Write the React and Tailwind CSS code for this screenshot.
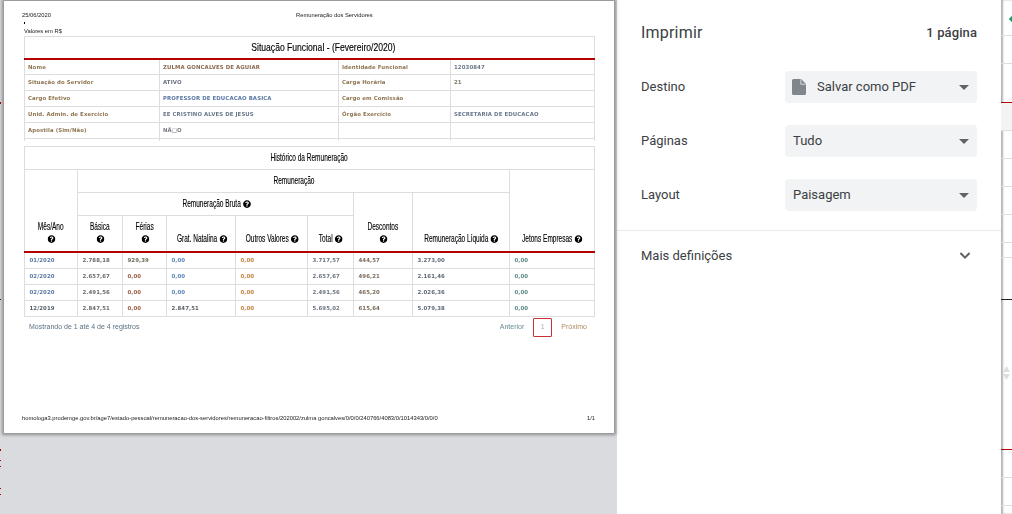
import { FaQuestionCircle } from "react-icons/fa";

const cellFont = "font-['DejaVu_Sans',sans-serif] font-bold text-[5.4px] tracking-[0.1px]";

const situacao = [
  ["Nome", "ZULMA GONCALVES DE AGUIAR", "Identidade Funcional", "12030847", "text-[#8f7550]", "text-[#8a6a50]", "text-[#8f7550]", "text-[#6a7888]"],
  ["Situação do Servidor", "ATIVO", "Carga Horária", "21", "text-[#8f7550]", "text-[#6a7280]", "text-[#8f7550]", "text-[#7a7a65]"],
  ["Cargo Efetivo", "PROFESSOR DE EDUCACAO BASICA", "Cargo em Comissão", "", "text-[#8f7550]", "text-[#5a78a5]", "text-[#8f7550]", ""],
  ["Unid. Admin. de Exercício", "EE CRISTINO ALVES DE JESUS", "Órgão Exercício", "SECRETARIA DE EDUCACAO", "text-[#8f7550]", "text-[#6a788c]", "text-[#8f7550]", "text-[#6a788c]"],
  ["Apostila (Sim/Não)", "NÃ□O", "", "", "text-[#8f7550]", "text-[#7a7580]", "", ""],
];

const historico = [
  ["01/2020", "2.788,18", "929,39", "0,00", "0,00", "3.717,57", "444,57", "3.273,00", "0,00"],
  ["02/2020", "2.657,67", "0,00", "0,00", "0,00", "2.657,67", "496,21", "2.161,46", "0,00"],
  ["02/2020", "2.491,56", "0,00", "0,00", "0,00", "2.491,56", "465,20", "2.026,36", "0,00"],
  ["12/2019", "2.847,51", "0,00", "2.847,51", "0,00", "5.695,02", "615,64", "5.079,38", "0,00"],
];

const historicoCores = [
  "text-[#5a78a5]",
  "text-[#6a6a70]",
  "text-[#a05a40]",
  "text-[#5585b5]",
  "text-[#c08040]",
  "text-[#6a7580]",
  "text-[#7a6a5a]",
  "text-[#606878]",
  "text-[#5a8585]",
];

// cells that don't follow their column's colour
const corEspecial = {
  "0-2": "text-[#6a6a55]",
  "3-0": "text-[#55606a]",
  "3-3": "text-[#5a5f66]",
};

const rightRows = [
  { h: "h-[36px]", line: "border-[#dddddd]" },
  { h: "h-[28px]", line: "border-[#dddddd]" },
  { h: "h-[39px]", line: "border-[#b30000]" },
  { h: "h-[28px]", line: "border-[#dddddd]", bg: "bg-[#f4f4f4]" },
  { h: "h-[28px]", line: "border-[#dddddd]" },
  { h: "h-[28px]", line: "border-[#dddddd]" },
  { h: "h-[28px]", line: "border-[#dddddd]" },
  { h: "h-[28px]", line: "border-[#dddddd]" },
  { h: "h-[15px]", line: "border-[#dddddd]" },
  { h: "h-[42px]", line: "border-[#222222]" },
  { h: "h-[150px]", line: "border-[#b30000]" },
  { h: "h-[28px]", line: "border-[#dddddd]" },
  { h: "h-[28px]", line: "border-[#dddddd]" },
];

const Help = () => (
  <FaQuestionCircle className="ml-[3px] inline-block scale-x-[1.6] text-[8px] text-black align-[-1px]" />
);

const HeadCell = ({ children, className = "", ...rest }) => (
  <th
    className={`border border-[#dddddd] p-0 font-['Liberation_Sans',sans-serif] text-[10.5px] font-normal text-black [-webkit-text-stroke:0.15px_black] ${className}`}
    {...rest}
  >
    <div className="flex justify-center">
      <span className="inline-block shrink-0 scale-x-[0.62] whitespace-nowrap">{children}</span>
    </div>
  </th>
);

const Caret = () => (
  <svg width="10" height="5" viewBox="0 0 10 5" className="shrink-0">
    <path d="M0 0h10L5 5z" fill="#5f6368" />
  </svg>
);

const Campo = ({ label, children }) => (
  <div className="flex h-[32px] items-center justify-between">
    <span className="text-[13px] text-[#3c4043]">{label}</span>
    <div className="flex h-[32px] w-[192px] items-center rounded-[4px] bg-[#f1f3f4] pl-[8px] pr-[8px] text-[13px] text-[#3c4043]">
      <div className="flex flex-1 items-center">{children}</div>
      <Caret />
    </div>
  </div>
);

const App = () => {
  return (
    <div className="flex h-[514px] w-[1012px] overflow-hidden bg-white font-['Roboto',sans-serif]">
      <div className="relative flex h-full w-[617px] shrink-0 bg-[#dadbde] pl-[4px] pr-[3px] pt-[1px]">
        {/* sliver of the page behind the dialog */}
        <div className="absolute left-0 top-[102px] h-[2px] w-[1px] bg-[#b30000]" />
        <div className="absolute left-0 top-[299px] h-[1px] w-[1px] bg-[#222222]" />
        <div className="absolute left-0 top-[449px] h-[2px] w-[1px] bg-[#b30000]" />
        <div className="absolute left-0 top-[460px] h-[1px] w-[1px] bg-[#b30000]" />
        <div className="absolute left-0 top-[466px] h-[1px] w-[1px] bg-[#b30000]" />
        <div className="absolute left-0 top-[488px] h-[1px] w-[1px] bg-[#b30000]" />
        <div className="absolute left-0 top-[494px] h-[1px] w-[1px] bg-[#b30000]" />

        <div className="flex h-[432px] w-[610px] flex-col bg-white px-[20px] pb-[10px] pt-[11px] shadow-[0_0_3px_2px_rgba(0,0,0,0.35)] blur-[0.25px]">
          <div className="relative flex h-[7px] items-center font-['Liberation_Sans',sans-serif] text-[5.8px] text-[#222222]">
            <span className="-ml-[2px]">25/06/2020</span>
            <span className="absolute left-[272px]">Remuneração dos Servidores</span>
          </div>
          <div className="mt-[3px] h-[2px] w-[1px] bg-black" />
          <div className="mt-[4px] h-[7px] font-['Liberation_Sans',sans-serif] text-[5.8px] leading-[7px] text-[#222222]">
            Valores em R$
          </div>

          <table className="mt-[1px] w-[570px] table-fixed border-collapse">
            <colgroup>
              <col className="w-[135px]" />
              <col className="w-[179px]" />
              <col className="w-[112px]" />
              <col className="w-[144px]" />
            </colgroup>
            <thead>
              <tr className="h-[22px]">
                <th
                  colSpan={4}
                  className="border border-[#dddddd] border-b-2 border-b-[#b30000] p-0 pl-[28px] font-['Liberation_Sans',sans-serif] text-[11px] font-normal text-black [-webkit-text-stroke:0.15px_black]"
                >
                  <div className="flex justify-center">
                    <span className="inline-block shrink-0 scale-x-[0.78] whitespace-nowrap">
                      Situação Funcional - (Fevereiro/2020)
                    </span>
                  </div>
                </th>
              </tr>
            </thead>
            <tbody>
              {situacao.map((row) => (
                <tr key={row[0]} className="h-[16px]">
                  {row.slice(0, 4).map((value, i) => (
                    <td
                      key={i}
                      className={`border border-[#dddddd] py-0 pl-[3px] pr-0 text-left whitespace-nowrap ${cellFont} ${row[4 + i]}`}
                    >
                      {value}
                    </td>
                  ))}
                </tr>
              ))}
              <tr className="h-[2px]">
                {[0, 1, 2, 3].map((i) => (
                  <td key={i} className="border-x border-[#dddddd] p-0" />
                ))}
              </tr>
            </tbody>
          </table>

          <table className="mt-[5px] w-[570px] table-fixed border-collapse">
            <colgroup>
              <col className="w-[53px]" />
              <col className="w-[45px]" />
              <col className="w-[44px]" />
              <col className="w-[69px]" />
              <col className="w-[72px]" />
              <col className="w-[46px]" />
              <col className="w-[59px]" />
              <col className="w-[97px]" />
              <col className="w-[85px]" />
            </colgroup>
            <thead>
              <tr className="h-[23px]">
                <HeadCell colSpan={9}>Histórico da Remuneração</HeadCell>
              </tr>
              <tr className="h-[23px]">
                <HeadCell rowSpan={3} className="border-b-2 border-b-[#b30000] align-bottom pb-[7px] leading-[12px]">
                  Mês/Ano
                  <br />
                  <Help />
                </HeadCell>
                <HeadCell colSpan={7}>Remuneração</HeadCell>
                <HeadCell rowSpan={3} className="border-b-2 border-b-[#b30000] align-bottom pb-[4px]">
                  Jetons Empresas <Help />
                </HeadCell>
              </tr>
              <tr className="h-[23px]">
                <HeadCell colSpan={5}>
                  Remuneração Bruta <Help />
                </HeadCell>
                <HeadCell rowSpan={2} className="border-b-2 border-b-[#b30000] align-bottom pb-[7px] leading-[12px]">
                  Descontos
                  <br />
                  <Help />
                </HeadCell>
                <HeadCell rowSpan={2} className="border-b-2 border-b-[#b30000] align-bottom pb-[4px]">
                  Remuneração Líquida <Help />
                </HeadCell>
              </tr>
              <tr className="h-[37px]">
                <HeadCell className="border-b-2 border-b-[#b30000] align-bottom pb-[7px] leading-[12px]">
                  Básica
                  <br />
                  <Help />
                </HeadCell>
                <HeadCell className="border-b-2 border-b-[#b30000] align-bottom pb-[7px] leading-[12px]">
                  Férias
                  <br />
                  <Help />
                </HeadCell>
                <HeadCell className="border-b-2 border-b-[#b30000] align-bottom pb-[4px]">
                  Grat. Natalina <Help />
                </HeadCell>
                <HeadCell className="border-b-2 border-b-[#b30000] align-bottom pb-[4px]">
                  Outros Valores <Help />
                </HeadCell>
                <HeadCell className="border-b-2 border-b-[#b30000] align-bottom pb-[4px]">
                  Total <Help />
                </HeadCell>
              </tr>
            </thead>
            <tbody>
              {historico.map((row, r) => (
                <tr key={r} className="h-[16px]">
                  {row.map((value, i) => (
                    <td
                      key={i}
                      className={`border border-[#dddddd] py-0 pl-[4.5px] pr-0 text-left whitespace-nowrap ${cellFont} ${corEspecial[`${r}-${i}`] || historicoCores[i]}`}
                    >
                      {value}
                    </td>
                  ))}
                </tr>
              ))}
            </tbody>
          </table>

          <div className="mt-[1px] flex items-center justify-between font-['Liberation_Sans',sans-serif] text-[7px] text-[#5a7080]">
            <span className="pl-[5px]">Mostrando de 1 até 4 de 4 registros</span>
            <div className="flex items-center pr-[7px]">
              <span className="text-[#6a8a98]">Anterior</span>
              <span className="mx-[9px] flex h-[19px] w-[19px] items-center justify-center rounded-[1px] border-[1.5px] border-[#c53030] text-[#aaaaaa]">
                1
              </span>
              <span className="text-[#b08a60]">Próximo</span>
            </div>
          </div>

          <div className="mt-auto flex items-center justify-between font-['Liberation_Sans',sans-serif] text-[5.8px] text-[#222222]">
            <span className="-ml-[2px]">
              homologa3.prodemge.gov.br/age7/estado-pessoal/remuneracao-dos-servidores/remuneracao-filtros/202002/zulma goncalves/0/0/0/240766/4083/0/1014343/0/0/0
            </span>
            <span className="-mr-[1px]">1/1</span>
          </div>
        </div>
      </div>

      <div className="flex h-full w-[384px] shrink-0 flex-col bg-white">
        <div className="flex h-[64px] items-center justify-between pl-[24px] pr-[24px]">
          <span className="pt-[1px] text-[16px] tracking-[0.2px] text-[#3c4043]">Imprimir</span>
          <span className="pt-[1px] text-[13px] font-medium tracking-[0.1px] text-[#3c4043]">1 página</span>
        </div>
        <div className="mt-[7px] flex flex-col gap-[22px] pl-[24px] pr-[24px]">
          <Campo label="Destino">
            <svg width="14" height="16" viewBox="0 0 14 16" className="mr-[11px] -ml-[1px]">
              <path d="M1.5 0H9l5 5v9.5a1.5 1.5 0 0 1-1.5 1.5h-11A1.5 1.5 0 0 1 0 14.5v-13A1.5 1.5 0 0 1 1.5 0z" fill="#80868b" />
              <path d="M8.5 0v5.5H14z" fill="#f1f3f4" />
              <path d="M9.2 0.5v4.3h4.3z" fill="#80868b" />
            </svg>
            Salvar como PDF
          </Campo>
          <Campo label="Páginas">Tudo</Campo>
          <Campo label="Layout">Paisagem</Campo>
        </div>
        <div className="mt-[19px] h-px w-full bg-[#e8eaed]" />
        <div className="flex h-[49px] items-center justify-between pl-[24px] pr-[30px]">
          <span className="text-[13px] text-[#3c4043]">Mais definições</span>
          <svg width="12" height="8" viewBox="0 0 12 8">
            <path d="M1.4 1 6 5.6 10.6 1" fill="none" stroke="#5f6368" strokeWidth="2" />
          </svg>
        </div>
      </div>

      {/* what is left of the page behind the print dialog */}
      <div className="relative flex w-[11px] shrink-0 flex-col bg-white shadow-[inset_2px_0_2px_rgba(0,0,0,0.3)]">
        {rightRows.map((row, i) => (
          <div key={i} className={`${row.h} ${row.bg || ""} shrink-0 border-b ${row.line}`} />
        ))}
        <div className="absolute left-[9px] top-[16px] h-[6px] w-[6px] rotate-45 bg-[#1e9e6a]" />
        <svg width="7" height="14" viewBox="0 0 7 14" className="absolute left-[2px] top-[366px]">
          <path d="M3.5 0 7 6H0zM0 8h7l-3.500 6z" fill="#dddddd" />
        </svg>
      </div>
    </div>
  );
};

export default App;
